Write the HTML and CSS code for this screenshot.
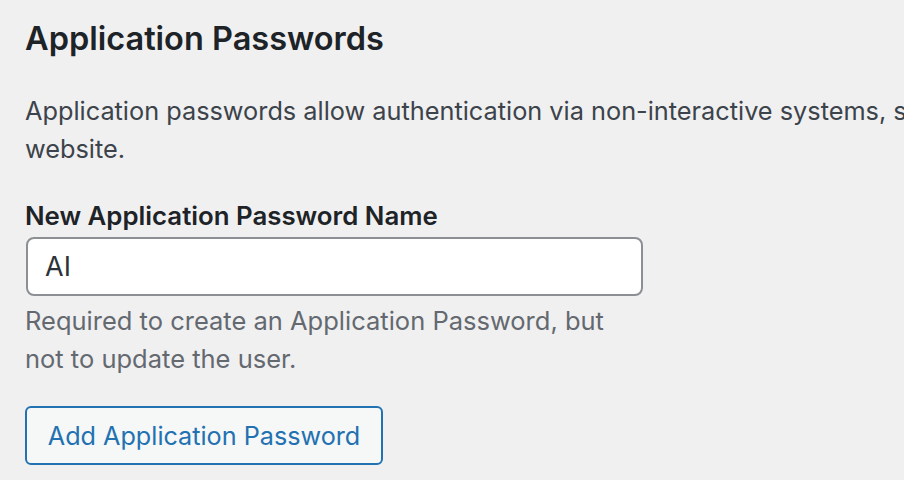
FILE: index.html
```html
<!DOCTYPE html>
<html lang="en">
<head>
<meta charset="utf-8">
<title>Application Passwords</title>
<link rel="stylesheet" href="styles.css">
</head>
<body>
<main class="section">
  <h2 class="title">Application Passwords</h2>
  <p class="intro">Application passwords allow authentication via non-interactive systems, such as XML-RPC or the REST API, without providing your actual password. Application passwords can be easily revoked. They cannot be used for traditional logins to your<br>website.</p>
  <div class="field">
    <label class="label" for="app-name">New Application Password Name</label>
    <input class="input" id="app-name" type="text" value="AI">
    <p class="description">Required to create an Application Password, but not to update the user.</p>
  </div>
  <button class="button" type="button">Add Application Password</button>
</main>
</body>
</html>
```
FILE: styles.css
```css
html, body {
  margin: 0;
  padding: 0;
  background: #f0f0f1;
  overflow: hidden;
}
body {
  font-family: Inter, "Liberation Sans", sans-serif;
  color: #3c434a;
  width: 904px;
  height: 480px;
}
.section {
  padding: 19px 0 0 25px;
  display: flex;
  flex-direction: column;
  align-items: flex-start;
  overflow: hidden;
}
.title {
  margin: 0;
  font-size: 32.5px;
  line-height: 40px;
  font-weight: 600;
  color: #1d2327;
}
.intro {
  margin: 33px 0 0;
  font-size: 25.3px;
  line-height: 38px;
  white-space: nowrap;
  color: #3c434a;
}
.field {
  margin-top: 31px;
  display: flex;
  flex-direction: column;
  align-items: flex-start;
}
.label {
  font-size: 25.8px;
  line-height: 34px;
  font-weight: 600;
  color: #1d2327;
}
.input {
  margin: 4px 0 0 1px;
  box-sizing: border-box;
  width: 617px;
  height: 59px;
  border: 2px solid #8c8f94;
  border-radius: 8px;
  background: #fff;
  padding: 0 17px;
  font-family: inherit;
  font-size: 27px;
  color: #2c3338;
  outline: none;
}
.description {
  margin: 6px 0 0;
  width: 600px;
  font-size: 25.5px;
  line-height: 38px;
  color: #646970;
}
.button {
  margin-top: 28px;
  box-sizing: border-box;
  height: 59px;
  width: 358px;
  padding: 0;
  text-align: center;
  border: 2px solid #2271b1;
  border-radius: 6px;
  background: #f6f7f7;
  color: #2271b1;
  font-family: inherit;
  font-size: 25.2px;
  cursor: pointer;
}
```
